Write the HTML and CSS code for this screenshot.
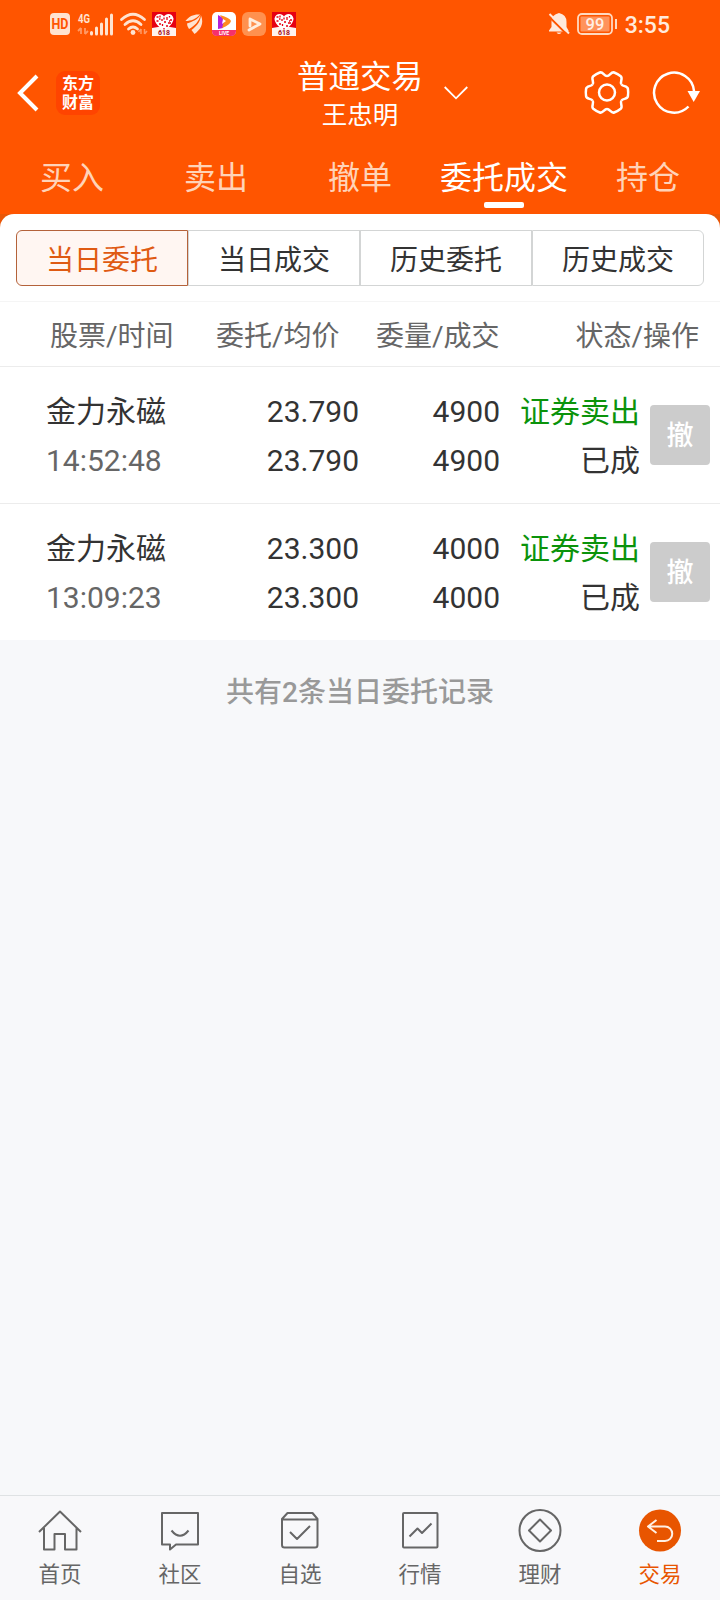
FILE: index.html
```html
<!DOCTYPE html>
<html lang="zh-CN">
<head>
    <meta charset="UTF-8">
    <title>普通交易</title>
    <link rel="stylesheet" href="styles.css">
</head>
<body>
    <svg width="0" height="0" class="defs">
        <defs>
            <path id="tooth" d="M14.3-8.25C15.8-5.65 20.300-7 20.900-3.800Q21.500 0 20.900 3.800C20.300 7 15.8 5.65 14.3 8.25"/>
            <g id="heart618">
                <rect width="24" height="24" fill="#e60012"/>
                <path d="M0 16Q12 13 24 16V24H0z" fill="#fff3ee"/>
                <path d="M12 19C7 15 2.500 11 2.500 6.500C3.500 1 10 1 12 4.500C14 1 20.500 1 21.500 6.500C21.500 11 17 15 12 19z" fill="#fff"/>
                <path d="M4.500 5h2M8 3.500v2M10 7v2M15 5v3M17.500 4v1.500M18 8h2M4.500 9h2M12 10h2M16 11h3M7 12h2M14 14h2M12 5.500v2M7 7h1.500M17 9h1M10.500 12v2M12 16v1.500" stroke="#e60012" stroke-width="1.300"/>
                <text x="12" y="22.800" text-anchor="middle" font-size="7" font-weight="700" fill="#a51220">618</text>
            </g>
        </defs>
    </svg>

    <header class="top">
        <div class="status-bar">
            <div class="status-left">
                <svg width="20" height="22" viewBox="0 0 20 22">
                    <rect width="20" height="22" rx="4" fill="#ffe3d0"/>
                    <text x="10" y="16" text-anchor="middle" font-size="14" font-weight="700" fill="#ff5500" textLength="17" lengthAdjust="spacingAndGlyphs">HD</text>
                </svg>
                <svg class="signal" width="38" height="24" viewBox="0 0 38 24">
                    <text x="2" y="11" font-size="13" font-weight="700" fill="#ffe3d0" textLength="12" lengthAdjust="spacingAndGlyphs">4G</text>
                    <path d="M5 16v6M5 16l-3 3M9 22v-6M9 22l3-3" stroke="#ff9a66" stroke-width="1.800" fill="none"/>
                    <path d="M15.500 20.500v1.500M20.500 16v6M25.500 12v10M30.500 7v15M35.500 3v19" stroke="#ffe3d0" stroke-width="3" stroke-linecap="round"/>
                </svg>
                <svg class="wifi" width="26" height="24" viewBox="0 0 26 24">
                    <path d="M1.500 7.500Q13-3 24.500 7.500M5 12.500Q13 5 21 12.500M8.500 17Q13 13 17.500 17" fill="none" stroke="#ffe3d0" stroke-width="2.800" stroke-linecap="round"/>
                    <circle cx="13" cy="20.500" r="2.400" fill="#ffe3d0"/>
                    <path d="M21 17v5M21 17l-2.500 3M24.500 22v-5M24.500 22l2.500-3" stroke="#ff9a66" stroke-width="1.500" fill="none"/>
                </svg>
                <svg width="24" height="24"><use href="#heart618"/></svg>
                <svg width="24" height="24" viewBox="0 0 24 24" fill="#ffe3d0">
                    <path d="M18 2.500C12 2 7 4 3.500 9C9 9 14 7 18 2.500z"/>
                    <path d="M18.500 3C15.500 7.500 11 9.500 5 11.500Q5 14.500 7 17C13 13.500 17 9.500 18.500 3z"/>
                    <path d="M19 3.500C18 11 14 14.500 9.500 18L12.500 22C18 18 22.500 12 19 3.500z"/>
                </svg>
                <svg width="24" height="24" viewBox="0 0 24 24">
                    <rect width="24" height="24" rx="5" fill="#fff"/>
                    <path d="M0 18H24V19Q24 24 19 24H5Q0 24 0 19z" fill="#f5316c"/>
                    <path d="M6 3L13 7L11 16L6 17z" fill="#b321d8"/>
                    <path d="M8 3Q18 6 19 9Q18 13 10 16L12 9z" fill="#ff8b1e"/>
                    <path d="M11 7L14 9L10 12z" fill="#fff"/>
                    <text x="12" y="22.500" text-anchor="middle" font-size="5" font-weight="700" fill="#fff">LIVE</text>
                </svg>
                <svg width="24" height="24" viewBox="0 0 24 24">
                    <rect width="24" height="24" rx="6" fill="#ff914f"/>
                    <path d="M8 14V7L18 12L7 18" fill="none" stroke="#ffeede" stroke-width="2.800" stroke-linejoin="round" stroke-linecap="round"/>
                </svg>
                <svg width="24" height="24"><use href="#heart618"/></svg>
            </div>
            <div class="status-right">
                <svg width="22" height="22" viewBox="0 0 22 22">
                    <path d="M11 0Q18.500 1.500 18.500 9V14L20.500 17.500V18.500H1V17.500L3.500 14V9Q3.500 1.500 11 0zM8.500 19.500h5q-2.500 3-5 0z" fill="#ffe9dc"/>
                    <path d="M0 2.500L20 22.500" stroke="#ff5500" stroke-width="2"/>
                    <path d="M1.500 1L21 20.500" stroke="#ffe9dc" stroke-width="2"/>
                </svg>
                <svg width="41" height="22" viewBox="0 0 41 22">
                    <rect x="1" y="1" width="34" height="20" rx="4" fill="none" stroke="#ffd9c0" stroke-width="1.800"/>
                    <rect x="3.500" y="3.500" width="29" height="15" rx="1" fill="#ff935c"/>
                    <path d="M39 6v10" stroke="#ffd9c0" stroke-width="2"/>
                    <text x="18" y="16.500" text-anchor="middle" font-size="16.500" font-weight="500" fill="#fff0e6">99</text>
                </svg>
                <span class="clock">3:55</span>
            </div>
        </div>

        <div class="title-bar">
            <div class="title-left">
                <svg width="22" height="38" viewBox="0 0 22 38">
                    <path d="M20 2L3 19L20 36" fill="none" stroke="#fff" stroke-width="4"/>
                </svg>
                <div class="logo">东方<br>财富</div>
            </div>
            <div class="title-center">
                <h1 class="title">普通交易</h1>
                <p class="account">王忠明</p>
            </div>
            <div class="title-right">
                <svg width="24" height="14" viewBox="0 0 24 14">
                    <path d="M0.700 1L12 12.300L23.300 1" fill="none" stroke="#fff" stroke-width="1.800"/>
                </svg>
                <div class="actions">
                    <svg width="46" height="46" viewBox="-23 -22.500 46 46" fill="none" stroke="#fff" stroke-width="2.500">
                        <use href="#tooth"/>
                        <use href="#tooth" transform="rotate(60)"/>
                        <use href="#tooth" transform="rotate(120)"/>
                        <use href="#tooth" transform="rotate(180)"/>
                        <use href="#tooth" transform="rotate(240)"/>
                        <use href="#tooth" transform="rotate(300)"/>
                        <circle r="8"/>
                    </svg>
                    <svg width="48" height="44" viewBox="0 0 48 44">
                        <path d="M36.500 35.500A20 20 0 1 1 42 20" fill="none" stroke="#fff" stroke-width="2.500"/>
                        <path d="M35.500 20H48L41.700 31z" fill="#fff"/>
                    </svg>
                </div>
            </div>
        </div>

        <nav class="tabs">
            <a class="tab">买入</a>
            <a class="tab">卖出</a>
            <a class="tab">撤单</a>
            <a class="tab active">委托成交</a>
            <a class="tab">持仓</a>
        </nav>
    </header>

    <main class="main">
        <div class="panel-wrap">
            <div class="panel">
                <div class="segments">
                    <div class="segment active">当日委托</div>
                    <div class="segment">当日成交</div>
                    <div class="segment">历史委托</div>
                    <div class="segment">历史成交</div>
                </div>
            </div>
        </div>

        <div class="list-head">
            <span class="head-name">股票/时间</span>
            <span class="head-price">委托/均价</span>
            <span class="head-amount">委量/成交</span>
            <span class="head-state">状态/操作</span>
        </div>

        <div class="order">
            <div class="col-name">金力永磁<br><span class="time">14:52:48</span></div>
            <div class="col-price">23.790<br>23.790</div>
            <div class="col-amount">4900<br>4900</div>
            <div class="col-state"><span class="sell">证券卖出</span><br>已成</div>
            <button class="cancel">撤</button>
        </div>
        <div class="order">
            <div class="col-name">金力永磁<br><span class="time">13:09:23</span></div>
            <div class="col-price">23.300<br>23.300</div>
            <div class="col-amount">4000<br>4000</div>
            <div class="col-state"><span class="sell">证券卖出</span><br>已成</div>
            <button class="cancel">撤</button>
        </div>

        <p class="summary">共有2条当日委托记录</p>
    </main>

    <nav class="bottom-nav">
        <a class="nav-item">
            <svg width="44" height="44" viewBox="0 0 44 44">
                <path d="M1 23L22 2.500L43 23M6 19V40.500H16.500V25H27V40.500H38.500V19"/>
            </svg>
            首页
        </a>
        <a class="nav-item">
            <svg width="44" height="44" viewBox="0 0 44 44">
                <path d="M4 4H40V35.500H18L12 40.500V35.500H4zM13.500 21.500Q22 32 30.500 21.500"/>
            </svg>
            社区
        </a>
        <a class="nav-item">
            <svg width="44" height="44" viewBox="0 0 44 44">
                <path d="M4 10L9.500 4H34.500L39.500 10V36Q39.500 38.500 37 38.500H6.500Q4 38.500 4 36zM4 10.500H39.500M12 23L19 30L32 17"/>
            </svg>
            自选
        </a>
        <a class="nav-item">
            <svg width="44" height="44" viewBox="0 0 44 44">
                <rect x="5" y="4" width="34.500" height="34.500" rx="1"/>
                <path d="M11.500 27.500L19.500 19.500L24 24L33.500 14.500"/>
            </svg>
            行情
        </a>
        <a class="nav-item">
            <svg width="44" height="44" viewBox="0 0 44 44">
                <circle cx="22" cy="21.500" r="20.500"/>
                <path d="M22 10.500L33 21.500L22 32.500L11 21.500z"/>
            </svg>
            理财
        </a>
        <a class="nav-item active">
            <svg width="44" height="44" viewBox="0 0 44 44">
                <circle class="disc" cx="22" cy="21.500" r="21"/>
                <path class="arrow" d="M18.500 11L10 17.500L18.500 24M10 17.500H27A7.250 7.250 0 0 1 27 32H19"/>
            </svg>
            交易
        </a>
    </nav>
</body>
</html>
```

FILE: styles.css
```css
* {
    box-sizing: border-box;
}

body {
    margin: 0;
    height: 1600px;
    display: flex;
    flex-direction: column;
    font-family: Roboto, "Noto Sans CJK SC", sans-serif;
    background: #f7f8fa;
    color: #333;
    overflow: hidden;
}

svg {
    display: block;
    flex-shrink: 0;
}

.defs {
    position: absolute;
}

.top {
    background: #ff5500;
    color: #fff;
}

/* status bar */
.status-bar {
    height: 48px;
    padding: 0 50px;
    display: flex;
    align-items: center;
    justify-content: space-between;
}

.status-left {
    display: flex;
    align-items: center;
    gap: 6px;
}

.signal,
.wifi {
    overflow: visible;
}

.status-right {
    display: flex;
    align-items: center;
    gap: 7px;
}

.clock {
    font-size: 23px;
    font-weight: 500;
    line-height: 26px;
    color: #ffeadd;
    padding-top: 3px;
}

/* title */
.title-bar {
    height: 94px;
    display: grid;
    grid-template-columns: 1fr auto 1fr;
}

.title-left {
    display: flex;
    align-items: center;
    gap: 17px;
    padding: 0 0 4px 17px;
}

.logo {
    width: 44px;
    height: 44px;
    padding-top: 3px;
    border-radius: 9px;
    background: #ff4400;
    font-size: 16px;
    font-weight: 700;
    line-height: 19px;
    text-align: center;
}

.title-center {
    padding-top: 10px;
    text-align: center;
}

.title {
    margin: 0;
    font-size: 31.500px;
    font-weight: 400;
    line-height: 39px;
}

.account {
    margin: 0;
    font-size: 25.500px;
    line-height: 37px;
}

.title-right {
    display: flex;
    align-items: center;
    justify-content: space-between;
    padding: 0 20px 5px 21px;
}

.actions {
    display: flex;
    align-items: center;
    gap: 22px;
}

.tabs {
    display: flex;
    height: 72px;
}

.tab {
    flex: 1 0 0;
    position: relative;
    font-size: 32px;
    line-height: 73px;
    text-align: center;
    white-space: nowrap;
    color: #ffd3b8;
}

.tab.active {
    color: #fff;
}

.tab.active::after {
    content: "";
    position: absolute;
    left: 52px;
    bottom: 6px;
    width: 40px;
    height: 6px;
    border-radius: 2px;
    background: #fff;
}

/* order list */
.main {
    flex: 1;
}

.panel-wrap {
    background: #e95606;
}

.panel {
    height: 87px;
    padding: 16px;
    background: #fff;
    border-radius: 14px 14px 0 0;
}

.segments {
    display: flex;
    height: 56px;
}

.segment {
    flex: 1;
    border: 1px solid #d3d5d5;
    font-size: 28px;
    line-height: 59px;
    text-align: center;
}

.segment:first-child {
    border-radius: 6px 0 0 6px;
}

.segment:last-child {
    border-radius: 0 6px 6px 0;
}

.segment.active {
    border-color: #b4623a;
    background: #fff6f2;
    color: #df5a12;
}

.list-head {
    display: flex;
    height: 66px;
    padding: 0 21px 0 50px;
    border-top: 1px solid #f5f5f5;
    border-bottom: 1px solid #ececec;
    background: #fff;
    font-size: 28px;
    line-height: 69px;
    color: #666;
}

.head-name {
    width: 166px;
}

.head-price {
    width: 160px;
}

.head-state {
    flex: 1;
    text-align: right;
}

.order {
    display: flex;
    align-items: center;
    height: 137px;
    padding: 0 10px 0 46px;
    border-bottom: 1px solid #ececec;
    background: #fff;
    font-size: 30px;
    line-height: 49px;
    text-align: right;
}

.order:nth-of-type(4) {
    height: 136px;
    border-bottom: 0;
}

.order div {
    padding-top: 2px;
}

.col-name {
    width: 154px;
    text-align: left;
}

.time {
    color: #666;
}

.col-price {
    width: 159px;
}

.col-amount {
    width: 141px;
}

.col-state {
    width: 140px;
}

.sell {
    color: #0b930b;
}

.cancel {
    width: 60px;
    height: 60px;
    margin-left: auto;
    padding: 3px 0 0;
    border: 0;
    border-radius: 4px;
    background: #ccc;
    color: #fff;
    font: 500 27px/57px Roboto, "Noto Sans CJK SC", sans-serif;
}

.summary {
    margin: 33px 0 0;
    font-size: 28px;
    font-weight: 500;
    line-height: 40px;
    text-align: center;
    color: #999;
}

/* bottom navigation */
.bottom-nav {
    display: flex;
    height: 105px;
    border-top: 1px solid #dfe2e4;
    background: #f8f8fa;
}

.nav-item {
    flex: 1;
    display: flex;
    flex-direction: column;
    align-items: center;
    padding-top: 13px;
    font-size: 21.500px;
    line-height: 44px;
    color: #666;
}

.nav-item svg {
    fill: none;
    stroke: #666;
    stroke-width: 2;
    stroke-linejoin: round;
}

.nav-item.active {
    color: #e85500;
}

.nav-item .disc {
    fill: #e85500;
    stroke: none;
}

.nav-item .arrow {
    stroke: #fff0e4;
    stroke-width: 2;
}
```
